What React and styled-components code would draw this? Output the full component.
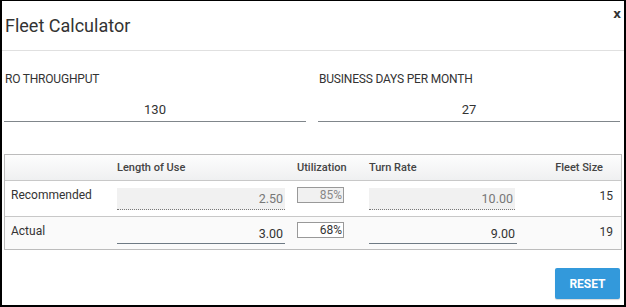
import React, { useState } from 'react'
import styled, { createGlobalStyle } from 'styled-components'

const GlobalStyle = createGlobalStyle`
    html, body { margin: 0; padding: 0; background: #fff; }
    body { font-family: Roboto, "Liberation Sans", sans-serif; color: #333; }
`
const Dialog = styled.div`
    width: 626px;
    height: 307px;
    box-sizing: border-box;
    border: 2px solid #000;
    border-top-width: 1px;
    display: flex;
    flex-direction: column;
    background: #fff;
`
const Header = styled.div`
    height: 50px;
    border-bottom: 1px solid #e0e0e0;
    display: flex;
    align-items: center;
    justify-content: space-between;
    padding: 0 0 0 3px;
    box-sizing: border-box;
`
const Title = styled.h2`
    margin: 0;
    font-size: 18px;
    font-weight: 400;
    color: #333;
`
const Close = styled.button`
    align-self: flex-start;
    margin: 6px 3px 0 0;
    border: none;
    background: none;
    padding: 0;
    font-family: "DejaVu Sans", sans-serif;
    font-size: 12px;
    font-weight: bold;
    color: #333;
    cursor: pointer;
`
const Body = styled.div`
    padding: 20px 2px 0 2px;
    display: flex;
    flex-direction: column;
`
const Fields = styled.div`
    display: grid;
    grid-template-columns: 302px 302px;
    column-gap: 12px;
`
const Field = styled.div`
    display: flex;
    flex-direction: column;
`
const Label = styled.label`
    font-size: 12px;
    color: #333;
    text-transform: uppercase;
    letter-spacing: -0.2px;
    line-height: 16px;
    padding-left: 1px;
`
const BigInput = styled.input`
    margin-top: 11px;
    border: none;
    border-bottom: 1px solid #80868b;
    box-sizing: border-box;
    font-family: inherit;
    font-size: 13px;
    color: #333;
    text-align: center;
    height: 24px;
    padding: 0;
    outline: none;
    background: transparent;
`
const Table = styled.div`
    margin-top: 32px;
    border: 1px solid #bcbcbc;
    display: grid;
    grid-template-columns: 112px 180px 72px 158px 1fr;
`
const HeadCell = styled.div`
    height: 25px;
    display: flex;
    align-items: center;
    justify-content: ${p => p.$right ? 'flex-end' : 'flex-start'};
    padding-right: ${p => p.$right ? '18px' : '0'};
    font-size: 11px;
    font-weight: 500;
    color: #444;
    background: linear-gradient(#fdfdfd, #eff0f1);
    border-bottom: 1px solid #c8c8c8;
`
const Cell = styled.div`
    height: ${p => p.$h}px;
    display: flex;
    align-items: ${p => p.$pt != null ? 'flex-start' : 'center'};
    justify-content: ${p => p.$right ? 'flex-end' : 'flex-start'};
    padding-left: ${p => p.$first ? '6px' : '0'};
    padding-right: ${p => p.$right ? '8px' : '0'};
    padding-top: ${p => p.$pt || 0}px;
    box-sizing: border-box;
    font-size: 12px;
    line-height: 14px;
    color: #333;
    background: ${p => p.$alt ? '#fafafa' : '#fff'};
    border-bottom: ${p => p.$last ? 'none' : '1px solid #c8c8c8'};
`
const NumInput = styled.input`
    width: ${p => p.$w}px;
    height: 22px;
    box-sizing: border-box;
    border: none;
    border-bottom: 1px ${p => p.readOnly ? 'dotted #777' : 'solid #6e7a84'};
    background: ${p => p.readOnly ? '#f1f1f1' : 'transparent'};
    color: ${p => p.readOnly ? '#777' : '#333'};
    font-family: inherit;
    font-size: 12.5px;
    text-align: right;
    padding: 1px 2px 0 0;
    outline: none;
`
const PctBox = styled.input`
    width: 47px;
    height: 16px;
    box-sizing: border-box;
    border: 1px solid #999;
    background: ${p => p.readOnly ? '#f1f1f1' : '#fff'};
    color: ${p => p.readOnly ? '#888' : '#333'};
    font-family: inherit;
    font-size: 12px;
    text-align: right;
    padding: 0 1px 0 0;
    outline: none;
`
const Footer = styled.div`
    display: flex;
    justify-content: flex-end;
    padding: 18px 2px 0 0;
`
const ResetButton = styled.button`
    width: 65px;
    height: 31px;
    border: none;
    border-radius: 2px;
    background: #3399db;
    color: #fff;
    font-family: Roboto, "Liberation Sans", sans-serif;
    font-size: 12px;
    font-weight: 700;
    cursor: pointer;
    box-shadow: 0 1px 1px rgba(0,0,0,0.15);
`

const rows = [
    { name: 'Recommended', length: '2.50', util: '85%', turn: '10.00', fleet: '15', readOnly: true },
    { name: 'Actual', length: '3.00', util: '68%', turn: '9.00', fleet: '19', readOnly: false },
]

function App() {
    const [throughput, setThroughput] = useState('130')
    const [days, setDays] = useState('27')

    return (
        <>
            <GlobalStyle />
            <Dialog>
                <Header>
                    <Title>Fleet Calculator</Title>
                    <Close>x</Close>
                </Header>
                <Body>
                    <Fields>
                        <Field>
                            <Label>RO Throughput</Label>
                            <BigInput value={throughput} onChange={e => setThroughput(e.target.value)} />
                        </Field>
                        <Field>
                            <Label>Business Days per Month</Label>
                            <BigInput value={days} onChange={e => setDays(e.target.value)} />
                        </Field>
                    </Fields>
                    <Table>
                        <HeadCell />
                        <HeadCell>Length of Use</HeadCell>
                        <HeadCell>Utilization</HeadCell>
                        <HeadCell>Turn Rate</HeadCell>
                        <HeadCell $right>Fleet Size</HeadCell>
                        {rows.map((r, i) => {
                            const alt = i === 1
                            const last = i === rows.length - 1
                            const h = alt ? 32 : 36
                            return (
                                <React.Fragment key={r.name}>
                                    <Cell $h={h} $first $alt={alt} $last={last} $pt={7}>{r.name}</Cell>
                                    <Cell $h={h} $alt={alt} $last={last}>
                                        <NumInput $w={168} defaultValue={r.length} readOnly={r.readOnly} />
                                    </Cell>
                                    <Cell $h={h} $alt={alt} $last={last} $pt={alt ? 5 : 6}>
                                        <PctBox defaultValue={r.util} readOnly={r.readOnly} />
                                    </Cell>
                                    <Cell $h={h} $alt={alt} $last={last}>
                                        <NumInput $w={r.readOnly ? 146 : 148} defaultValue={r.turn} readOnly={r.readOnly} />
                                    </Cell>
                                    <Cell $h={h} $alt={alt} $last={last} $right $pt={8}>{r.fleet}</Cell>
                                </React.Fragment>
                            )
                        })}
                    </Table>
                    <Footer>
                        <ResetButton>RESET</ResetButton>
                    </Footer>
                </Body>
            </Dialog>
        </>
    )
}

export default App
